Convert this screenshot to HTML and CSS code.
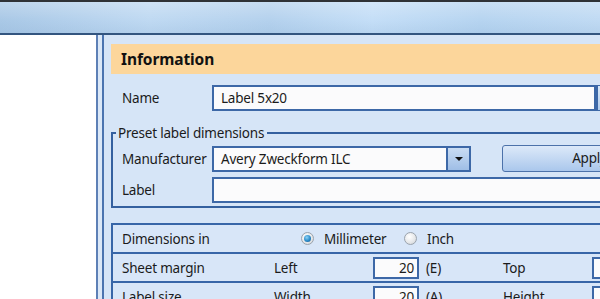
FILE: index.html
```html
<!DOCTYPE html>
<html>
<head>
<meta charset="utf-8">
<link rel="stylesheet" href="styles.css">
</head>
<body>
<div class="window">
  <div class="titlebar"></div>
  <div class="main">
    <div class="leftpanel"></div>
    <div class="splitter"></div>
    <div class="content">
      <div class="header">Information</div>
      <div class="row name-row">
        <span class="lbl">Name</span>
        <div class="textbox name-box">Label 5x20</div>
        <div class="sidebtn"></div>
      </div>
      <fieldset class="group">
        <legend>Preset label dimensions</legend>
        <div class="row">
          <span class="lbl glbl">Manufacturer</span>
          <div class="combo">
            <div class="combo-text">Avery Zweckform ILC</div>
            <div class="combo-btn"><span class="arrow"></span></div>
          </div>
          <div class="apply">Apply</div>
        </div>
        <div class="row label-row">
          <span class="lbl glbl">Label</span>
          <div class="textbox label-box"></div>
        </div>
      </fieldset>
      <div class="table">
        <div class="trow radios">
          <span class="c-first">Dimensions in</span>
          <span class="radio on"><span class="dot"></span></span>
          <span class="r-text mm">Millimeter</span>
          <span class="radio"></span>
          <span class="r-text">Inch</span>
        </div>
        <div class="trow grid">
          <span>Sheet margin</span>
          <span>Left</span>
          <div class="num">20</div>
          <span class="unit">(E)</span>
          <span>Top</span>
          <div class="num"></div>
        </div>
        <div class="trow grid">
          <span>Label size</span>
          <span>Width</span>
          <div class="num">20</div>
          <span class="unit">(A)</span>
          <span>Height</span>
          <div class="num"></div>
        </div>
      </div>
    </div>
  </div>
</div>
</body>
</html>
```

FILE: styles.css
```css
html, body {
  margin: 0;
  padding: 0;
  width: 600px;
  height: 299px;
  overflow: hidden;
}
body {
  font-family: "Noto Sans", "Open Sans", sans-serif;
  font-size: 13.5px;
  letter-spacing: -0.2px;
  color: #1b1b1b;
}
.window {
  width: 600px;
  height: 299px;
  display: flex;
  flex-direction: column;
  background: #d6e5f7;
}
.titlebar {
  height: 31px;
  flex: none;
  border-top: 2px solid #2f3236;
  border-bottom: 2px solid #33557f;
  background:
    linear-gradient(180deg, rgba(255,255,255,0.25) 0%, rgba(255,255,255,0) 60%, rgba(120,160,200,0.15) 100%),
    linear-gradient(90deg, #a9c8e6 0%, #bfd9f2 25%, #b4d1ed 45%, #c4def7 62%, #b6d4f0 80%, #c0daf3 100%);
}
.main {
  flex: 1;
  display: flex;
  min-height: 0;
}
.leftpanel {
  width: 96px;
  flex: none;
  background: #ffffff;
}
.splitter {
  width: 4px;
  flex: none;
  background: #dbe8f7;
  border-left: 2px solid #5d80b6;
  border-right: 2px solid #4b74b0;
}
.content {
  flex: none;
  width: 600px;
  padding: 9px 0 0 7px;
  background: #d6e5f7;
}
.header {
  height: 30px;
  line-height: 30px;
  background: #fcd69b;
  padding-left: 10px;
  font-weight: bold;
  font-size: 15.5px;
  letter-spacing: -0.1px;
  color: #111;
}
.row {
  display: flex;
  align-items: center;
}
.lbl {
  width: 90px;
  padding-left: 11px;
  flex: none;
}
.name-row {
  margin-top: 11px;
}
.textbox {
  box-sizing: border-box;
  height: 26px;
  line-height: 22px;
  border: 2px solid #3d68a7;
  background: #fbfbfc;
  padding-left: 7px;
}
.name-box {
  width: 384px;
  flex: none;
}
.sidebtn {
  width: 30px;
  height: 26px;
  box-sizing: border-box;
  border: 1px solid #3d68a7;
  border-left-width: 2px;
  background: linear-gradient(180deg, #dae8f8, #b0cbec);
  flex: none;
}
.group {
  margin: 14px 0 0 0;
  padding: 5px 0 3px 0;
  border: 2px solid #34609f;
  border-right: none;
  min-width: 0;
}
.group legend {
  padding: 0 3px 0 2px;
  margin-left: 3px;
  line-height: 16px;
}
.glbl {
  width: 90px;
  padding-left: 9px;
}
.combo {
  display: flex;
  width: 259px;
  height: 26px;
  box-sizing: border-box;
  border: 2px solid #3d68a7;
  flex: none;
}
.combo-text {
  flex: 1;
  background: #fbfbfc;
  line-height: 22px;
  padding-left: 7px;
}
.combo-btn {
  width: 21px;
  border-left: 2px solid #3d68a7;
  background: linear-gradient(180deg, #c9dcf3, #9fbee6);
  display: flex;
  align-items: center;
  justify-content: center;
}
.arrow {
  width: 0;
  height: 0;
  border-left: 4px solid transparent;
  border-right: 4px solid transparent;
  border-top: 4px solid #111;
}
.apply {
  margin-left: 31px;
  width: 175px;
  height: 27px;
  box-sizing: border-box;
  border: 1px solid #4c72aa;
  border-radius: 3px;
  background: linear-gradient(180deg, #dce9f9 0%, #c6daf3 45%, #aac7ec 100%);
  text-align: center;
  line-height: 25px;
  flex: none;
  margin-top: -1px;
}
.label-row {
  margin-top: 5px;
}
.label-box {
  width: 400px;
  flex: none;
}
.table {
  margin-top: 15px;
  border: 2px solid #3866a8;
  border-right: none;
}
.trow {
  height: 27px;
  border-bottom: 2px solid #3866a8;
  background: #d8e6f8;
  align-items: center;
}
.trow:last-child {
  border-bottom: none;
}
.radios {
  display: flex;
}
.c-first {
  width: 179px;
  padding-left: 9px;
  flex: none;
}
.radio {
  width: 11px;
  height: 11px;
  border-radius: 50%;
  border: 1px solid #9aa3ad;
  background: radial-gradient(circle at 40% 35%, #ffffff 0%, #e4e6e8 60%, #c9ccd0 100%);
  display: flex;
  align-items: center;
  justify-content: center;
  flex: none;
}
.radio .dot {
  width: 7px;
  height: 7px;
  border-radius: 50%;
  background: radial-gradient(circle at 40% 35%, #8fd3f5 0%, #2a8bc9 55%, #1a4f86 100%);
}
.r-text {
  margin-left: 10px;
}
.mm {
  width: 80px;
}
.grid {
  display: grid;
  grid-template-columns: 152px 99px 46px 84px 89px 60px;
  padding-left: 9px;
}
.num {
  box-sizing: border-box;
  height: 22px;
  line-height: 18px;
  border: 2px solid #3d68a7;
  background: #fbfbfc;
  text-align: right;
  padding-right: 3px;
}
.unit {
  padding-left: 7px;
}
```
